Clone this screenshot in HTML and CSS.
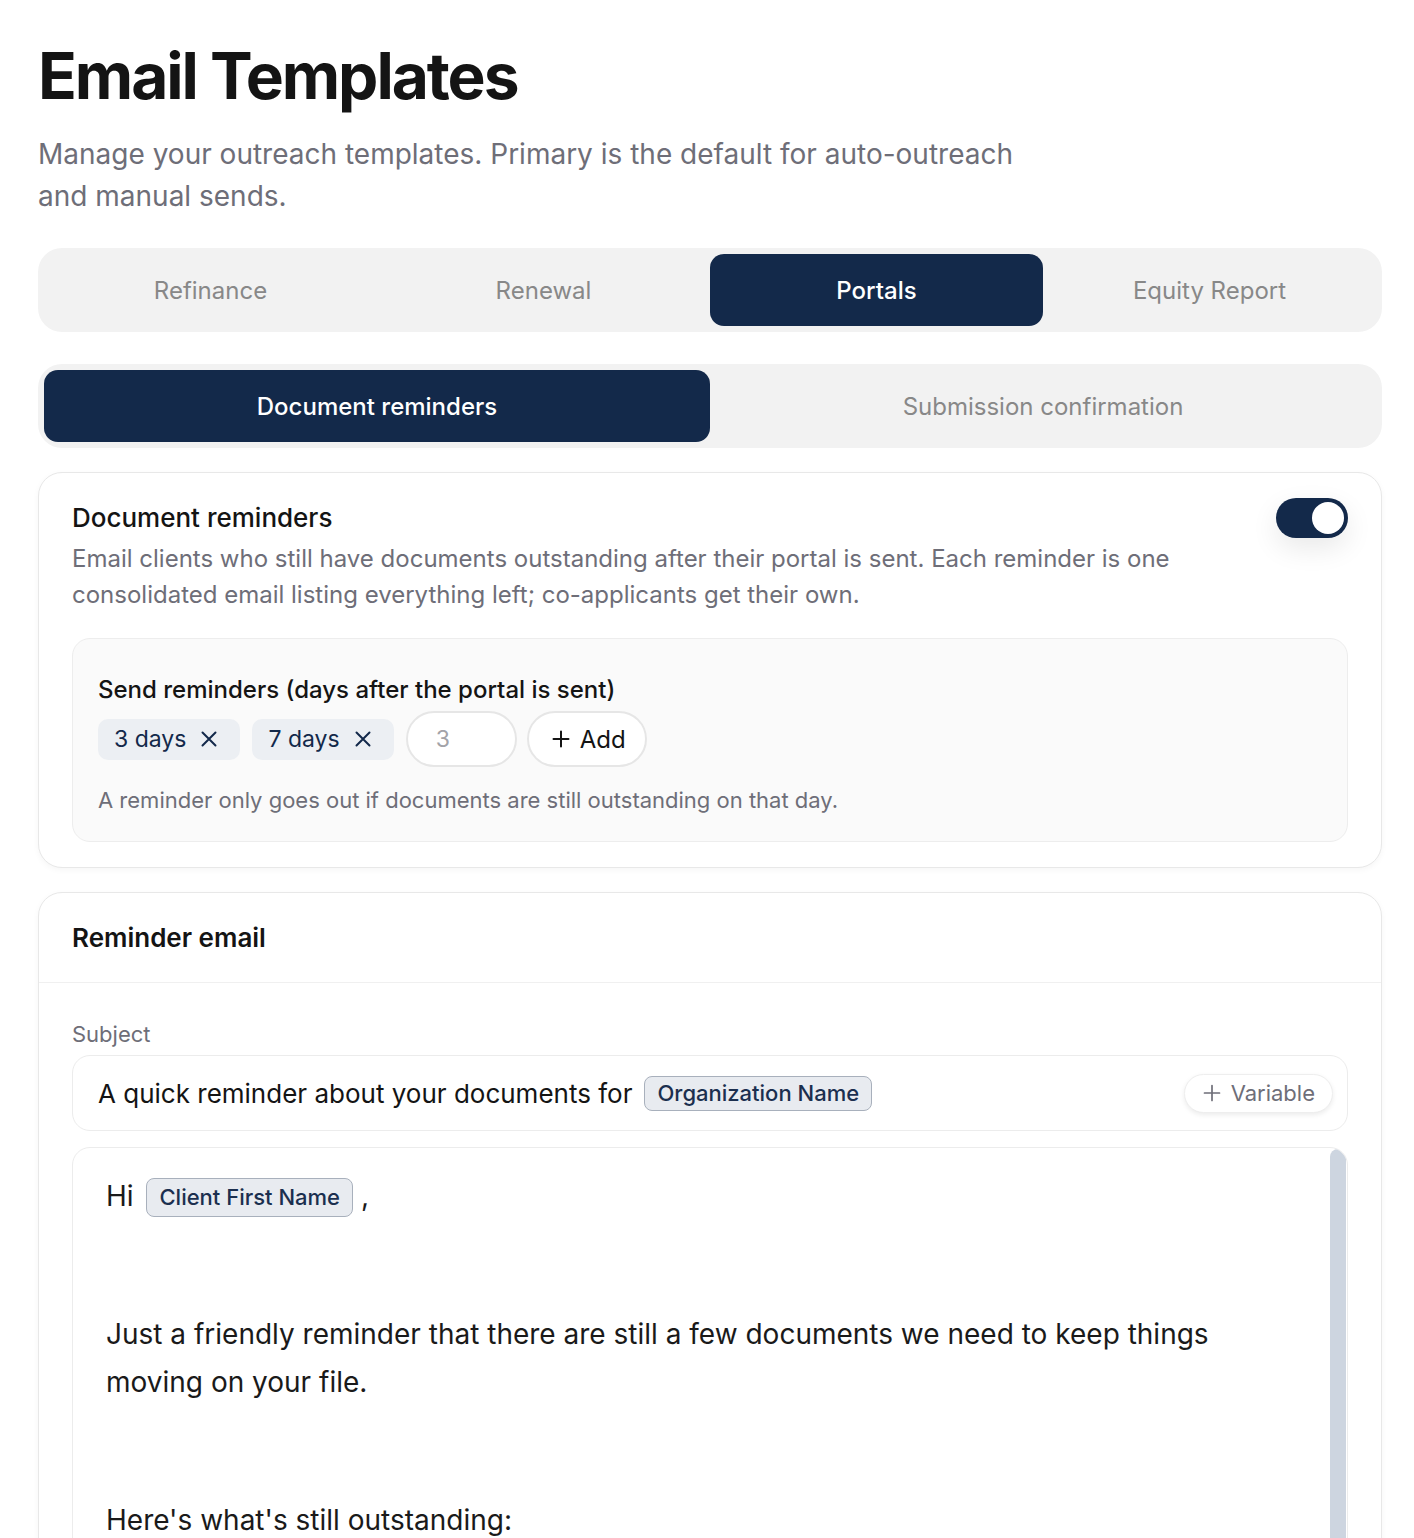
FILE: index.html
```html
<!DOCTYPE html>
<html lang="en">
<head>
  <meta charset="UTF-8">
  <meta name="viewport" content="width=device-width, initial-scale=1">

  <title>Email Templates</title>

  <link rel="stylesheet" href="styles.css">
</head>
<body>

  <main class="page">
    <header class="page-head">
      <h1>Email Templates</h1>
      <p>Manage your outreach templates. Primary is the default for auto-outreach and manual sends.</p>
    </header>

    <nav class="seg seg-4">
      <button class="seg-btn">Refinance</button>
      <button class="seg-btn">Renewal</button>
      <button class="seg-btn active">Portals</button>
      <button class="seg-btn">Equity Report</button>
    </nav>

    <nav class="seg seg-2">
      <button class="seg-btn active">Document reminders</button>
      <button class="seg-btn">Submission confirmation</button>
    </nav>

    <section class="card settings">
      <div class="settings-head">
        <div>
          <h2>Document reminders</h2>
          <p class="muted">Email clients who still have documents outstanding after their portal is sent. Each reminder is one consolidated email listing everything left; co-applicants get their own.</p>
        </div>
        <button class="switch on" aria-label="Toggle document reminders"><span class="knob"></span></button>
      </div>

      <div class="schedule">
        <label class="schedule-label">Send reminders (days after the portal is sent)</label>
        <div class="day-row">
          <span class="day-chip">3 days
            <svg viewBox="0 0 18 18" width="18" height="18"><path d="M2.5 2.5l13 13M15.5 2.5l-13 13" stroke="currentColor" stroke-width="2" stroke-linecap="round"/></svg>
          </span>
          <span class="day-chip">7 days
            <svg viewBox="0 0 18 18" width="18" height="18"><path d="M2.5 2.5l13 13M15.5 2.5l-13 13" stroke="currentColor" stroke-width="2" stroke-linecap="round"/></svg>
          </span>
          <input class="day-input" type="text" placeholder="3">
          <button class="pill-btn">
            <svg viewBox="0 0 18 18" width="18" height="18"><path d="M9 1.5v15M1.5 9h15" stroke="currentColor" stroke-width="2" stroke-linecap="round"/></svg>
            Add
          </button>
        </div>
        <p class="hint">A reminder only goes out if documents are still outstanding on that day.</p>
      </div>
    </section>

    <section class="card email">
      <div class="email-head">
        <h2>Reminder email</h2>
      </div>
      <div class="email-body">
        <div class="field-label">Subject</div>
        <div class="subject">
          <span>A quick reminder about your documents for</span>
          <span class="var">Organization Name</span>
          <button class="var-btn">
            <svg viewBox="0 0 18 18" width="18" height="18"><path d="M9 1.5v15M1.5 9h15" stroke="currentColor" stroke-width="1.7" stroke-linecap="round"/></svg>
            Variable
          </button>
        </div>

        <div class="editor">
          <div class="editor-content">
            <p>Hi <span class="var">Client First Name</span> ,</p>
            <p><br></p>
            <p>Just a friendly reminder that there are still a few documents we need to keep things moving on your file.</p>
            <p><br></p>
            <p>Here's what's still outstanding:</p>
            <p><br></p>
            <p>Once everything is uploaded we'll take it from there and be in touch with next steps.</p>
            <p><br></p>
            <p>Thanks,</p>
          </div>
          <div class="scroll-rail"><div class="scroll-thumb"></div></div>
        </div>
      </div>
    </section>
  </main>

</body>
</html>
```

FILE: styles.css
```css
:root {
  --navy: #13294a;
  --ink: #141414;
  --muted: #6e6e78;
  --line: #e8e8e8;
  --seg-bg: #f2f2f2;
  --chip-bg: #eceff3;
}
* { margin: 0; padding: 0; box-sizing: border-box; }
body {
  font-family: Inter, "Noto Sans", sans-serif;
  color: var(--ink);
  background: #fff;
  height: 100vh;
  overflow: hidden;
}
button, input { font-family: inherit; }

.page { padding: 38px 32px 0 38px; }

/* header */
.page-head h1 {
  font-size: 64px; font-weight: 700; letter-spacing: -0.032em;
  line-height: 76px;
}
.page-head p {
  max-width: 1000px; margin-top: 19px;
  font-size: 28px; line-height: 42px; color: var(--muted);
}

/* segmented tabs */
.seg {
  display: grid; padding: 6px; margin-top: 32px;
  background: var(--seg-bg); border-radius: 24px;
}
.page-head + .seg { margin-top: 31px; }
.seg-4 { grid-template-columns: repeat(4, 1fr); }
.seg-2 { grid-template-columns: repeat(2, 1fr); }
.seg-btn {
  height: 72px; border: none; background: none; border-radius: 14px;
  font-size: 24px; color: #888; cursor: pointer;
}
.seg-btn.active { background: var(--navy); color: #fff; font-weight: 500; }

/* cards */
.card {
  margin-top: 24px; border: 1px solid var(--line); border-radius: 24px;
  background: #fff; box-shadow: 0 2px 6px rgba(0,0,0,0.04);
}
h2 { font-size: 26px; font-weight: 500; line-height: 36px; }
.muted { color: var(--muted); }

.settings { padding: 27px 33px 25px; }
.settings-head { display: flex; justify-content: space-between; align-items: flex-start; gap: 40px; }
.settings-head .muted { margin-top: 5px; font-size: 24px; line-height: 36px; }

.switch {
  flex: none; width: 72px; height: 40px; margin-top: -2px;
  border: none; border-radius: 20px; background: #d4d8de;
  padding: 4px; display: flex; cursor: pointer;
  box-shadow: 0 10px 28px rgba(0,0,0,0.09);
}
.switch.on { background: var(--navy); justify-content: flex-end; }
.knob { width: 32px; height: 32px; border-radius: 50%; background: #fff; }

.schedule {
  margin-top: 25px; padding: 34px 25px 25px;
  background: #fafafa; border: 1px solid #ededed; border-radius: 18px;
}
.schedule-label { display: block; font-size: 24px; font-weight: 500; line-height: 34px; }
.day-row { display: flex; align-items: center; gap: 12px; margin-top: 4px; }
.day-chip {
  display: inline-flex; align-items: center; gap: 14px;
  height: 41px; padding: 0 22px 0 16px; border-radius: 10px;
  background: var(--chip-bg); color: var(--navy); font-size: 23px;
}
.day-input {
  width: 111px; height: 56px; padding: 0 28px;
  border: 2px solid #e6e6e6; border-radius: 28px; background: #fff;
  font-size: 23px; color: var(--ink); outline: none;
}
.day-input::placeholder { color: #a3a3a8; }
.pill-btn {
  display: inline-flex; align-items: center; gap: 10px;
  height: 56px; margin-left: -2px; padding: 0 19px 0 23px;
  border: 2px solid #e6e6e6; border-radius: 28px; background: #fff;
  font-size: 24px; color: var(--ink); cursor: pointer;
}
.hint { margin-top: 17px; font-size: 22px; line-height: 32px; color: var(--muted); }

/* email editor card */
.email-head { padding: 27px 33px 26px; border-bottom: 1px solid #f0f0f0; }
.email-head h2 { font-weight: 600; }
.email-body { padding: 35px 33px 0; }
.field-label { font-size: 22px; line-height: 32px; color: var(--muted); }
.subject {
  display: flex; align-items: center; gap: 12px;
  height: 76px; margin-top: 5px; padding: 0 14px 0 25px;
  border: 1px solid #ececec; border-radius: 18px;
  font-size: 26px;
}
.var {
  display: inline-block; padding: 0 12px; line-height: 33px;
  background: #e8ebf0; border: 1.5px solid #a8b0bc; border-radius: 8px;
  color: #1b2f4f; font-size: 22px; font-weight: 500;
}
.var-btn {
  margin-left: auto; display: inline-flex; align-items: center; gap: 10px;
  height: 39px; padding: 0 17px 0 18px; border: 1px solid #eee; border-radius: 20px;
  background: #fff; color: var(--muted); font-size: 22px; cursor: pointer;
  box-shadow: 0 2px 5px rgba(0,0,0,0.08);
}

.editor {
  display: flex; height: 720px; margin-top: 16px; overflow: hidden;
  border: 1px solid #ececec; border-radius: 18px;
}
.editor-content {
  flex: 1; padding: 24px 30px 24px 33px;
  font-size: 28px; line-height: 48px; color: #1a1a1a;
}
.editor-content p { margin-bottom: 21px; }
.editor-content .var { margin-left: 5px; padding: 0 12px; line-height: 37px; vertical-align: 1px; }

/* custom scrollbar */
.scroll-rail { flex: none; width: 16px; margin-right: 1px; padding-top: 1px; }
.scroll-thumb { height: 540px; border-radius: 8px; background: #cdd5e0; }
```
